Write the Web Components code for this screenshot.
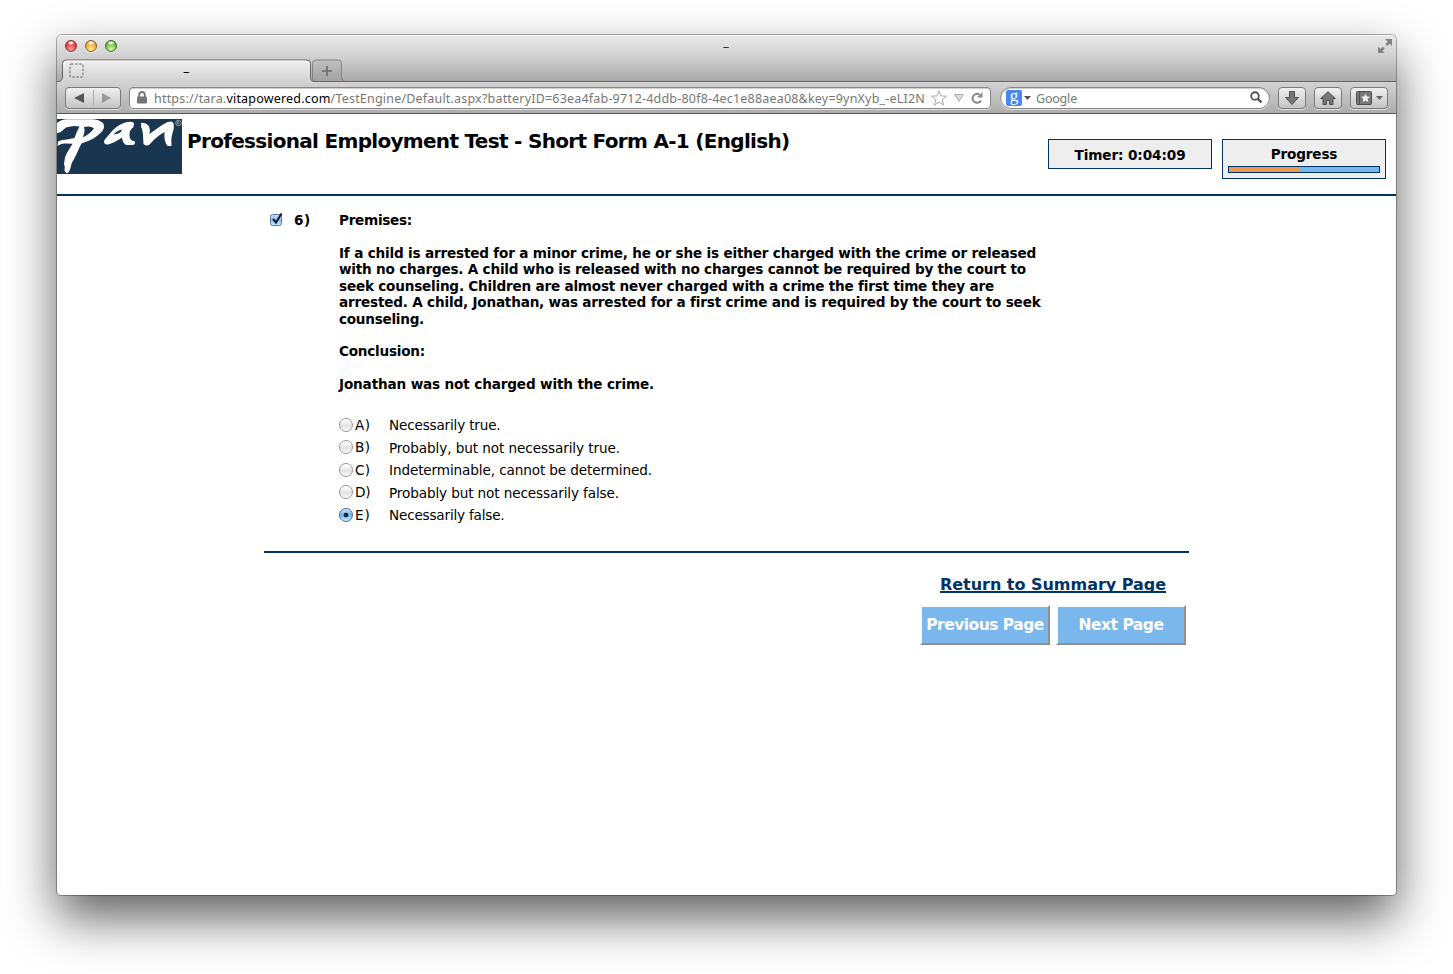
<!DOCTYPE html>
<html lang="en"><head><meta charset="utf-8"><title>Professional Employment Test</title>
<style>
html,body{margin:0;background:#fff}
body{width:1453px;height:974px;overflow:hidden;font-family:"DejaVu Sans",Verdana,sans-serif;color:#000}
</style></head><body>
<browser-window>
<title-bar slot="chrome"></title-bar>
<tab-strip slot="chrome"></tab-strip>
<nav-toolbar slot="chrome"></nav-toolbar>
<test-header></test-header>
<test-question></test-question>
<test-footer></test-footer>
</browser-window>
<script>
function define(name, html, after){
  customElements.define(name, class extends HTMLElement{
    constructor(){
      super();
      const t=document.createElement('template');
      t.innerHTML=html;
      this.attachShadow({mode:'open'}).append(t.content.cloneNode(true));
    }
    connectedCallback(){ if(after) after(this); }
  });
}
/* Text set to a fixed measure by spreading the letters evenly. */
define('fit-text',`<style>:host{display:inline-block;white-space:nowrap}span{display:inline-block;white-space:pre}</style><span><slot></slot></span>`,el=>{
  const s=el.shadowRoot.querySelector('span'), w=parseFloat(el.getAttribute('w'));
  const n=s.getBoundingClientRect().width;
  if(n&&w) s.style.letterSpacing=((w-n)/el.textContent.length)+'px';
});

define('title-bar',`<style>
:host{display:grid;grid-template-columns:1fr auto 1fr;align-items:center;height:24px;padding:0 4px 2px 8px;box-sizing:border-box}
.l{display:flex;gap:8px}
i{width:12px;height:12px;box-sizing:border-box;border-radius:50%;border:1px solid #8c2a28;background:radial-gradient(ellipse 4px 2.5px at 50% 18%,#fff 20%,transparent),radial-gradient(circle at 50% 85%,#ffaaa0,#e8393c 60%,#bb2528);box-shadow:0 1px 0 #f4f4f4}
i.y{border-color:#8e5e1c;background:radial-gradient(ellipse 4px 2.5px at 50% 18%,#fff 20%,transparent),radial-gradient(circle at 50% 85%,#ffee9c,#f0a835 60%,#c47a1c)}
i.g{border-color:#3c7022;background:radial-gradient(ellipse 4px 2.5px at 50% 18%,#fff 20%,transparent),radial-gradient(circle at 50% 85%,#d4f8a8,#75bd4a 60%,#4a8c2c)}
b{font:13px "Open Sans",sans-serif;color:#333;margin-right:5px}
svg{justify-self:end}
</style><div class="l"><i></i><i class="y"></i><i class="g"></i></div><b>–</b>
<svg width="15" height="15" viewBox="0 0 15 15"><g fill="#858585"><path d="M8 0h7v7l-2.3-2.3-2.4 2.4-2-2 2.4-2.4z"/><path d="M1 7.500v6.500h6.500l-2-2 2.200-2.200-2-2-2.400 2z"/></g></svg>`);

define('tab-strip',`<style>
:host{display:flex;height:23px;position:relative;align-items:stretch}
.tab{display:flex;align-items:center;width:248px;margin-left:6px;position:relative;font:13px "Open Sans",sans-serif}
.tab svg.f{margin-left:6px}.tab b{font-weight:400;margin-left:99px}
.plus{width:31px;display:grid;place-items:center;padding-left:0}
svg.bg{position:absolute;left:0;top:0}
.plus svg{position:relative}
</style>
<svg class="bg" width="1339" height="23" viewBox="0 0 1339 23">
<defs><linearGradient id="t" x1="0" y1="0" x2="0" y2="1"><stop stop-color="#efefef"/><stop offset="1" stop-color="#d2d2d2"/></linearGradient></defs>
<path d="M1 23C4 22 5.500 21 5.500 18V4.500Q5.500 1 9 1H250Q253.500 1 253.500 4.500V18C253.500 21 254.500 22 257 23Z" fill="url(#t)"/>
<path d="M255.500 18V4.500Q255.500 1 259 1H281Q284.500 1 284.500 4.500V18Q284.500 22 288 22.500H258Q255.500 22 255.500 18Z" fill="#777" fill-opacity=".13" stroke="#777" stroke-opacity=".8"/>
<path d="M0 22.500H1C4 22.500 5.500 21 5.500 18V4.500Q5.500 1 9 1H250Q253.500 1 253.500 4.500V18C253.500 21 254.500 22.500 257 22.500H1339" fill="none" stroke="#686868"/>
<path d="M7 6Q7 2.200 10 2.200H249" fill="none" stroke="#fff"/></svg>
<div class="tab"><svg class="f" width="15" height="15"><rect x="1" y="1" width="13" height="13" rx="1" fill="none" stroke="#666" stroke-dasharray="2.500 1.500"/></svg><b>–</b></div>
<div class="plus"><svg width="12" height="12"><path d="M6 1v10M1 6h10" stroke="#6a6a6a" stroke-width="1.700"/></svg></div>`);

define('nav-toolbar',`<style>
:host{display:flex;align-items:center;height:32px;box-sizing:border-box;padding:0 8px;border-bottom:1px solid #585858;background:linear-gradient(#d3d3d3,#adadad);font-family:"Noto Sans","Open Sans",sans-serif;font-size:12.500px;color:#777}
.btn{box-sizing:border-box;height:22px;border:1px solid #7b7b7b;border-radius:4px;background:linear-gradient(#f0f0f0,#c4c4c4);box-shadow:0 1px 0 #ddd;display:flex;align-items:center;justify-content:center}
.nav{width:56px;justify-content:space-between;padding:0 9px 0 8px}
.nav i{width:1px;height:16px;background:#b0b0b0;margin:0}
.field{box-sizing:border-box;height:22px;border:1px solid #888;background:#fff;box-shadow:inset 0 1px 1px #ccc,0 1px 0 #ddd;display:flex;align-items:center}
.url{width:862px;margin-left:8px;border-radius:4px;padding-left:7px}
fit-text{padding-top:1px}
.url fit-text{margin-left:7px;width:771px}
.search{width:270px;margin-left:9px;border-radius:11px;padding:0 6px 0 5px}
.g{box-sizing:border-box;width:16px;height:16px;border-radius:2px;background:#4787ee;color:#fff;font:17px/12px "Liberation Serif",serif;text-align:center}
.search .car{margin:0 5px 0 2px}.search .mag{margin-left:auto}
</style>
<div class="btn nav"><svg width="10" height="10"><path d="M0 5L10 0v10z" fill="#555"/></svg><i></i><svg width="9" height="10"><path d="M9 5L0 0v10z" fill="#999"/></svg></div>
<div class="field url"><svg width="10" height="13" viewBox="0 0 10 13"><path d="M2.200 6V3.800Q2.200 1 5 1t2.800 2.800V6" fill="none" stroke="#757575" stroke-width="1.800"/><rect y="5.500" width="10" height="7" rx="1" fill="#757575"/></svg>
<fit-text w="771">https://tara.<span style="color:#000">vitapowered.com</span>/TestEngine/Default.aspx?batteryID=63ea4fab-9712-4ddb-80f8-4ec1e88aea08&amp;key=9ynXyb_-eLI2N</fit-text>
<svg style="margin-left:6px" width="16" height="16" viewBox="0 0 16 16"><path d="M8 .8l2 5.100 5.400.300-4.200 3.500 1.400 5.300L8 12.100 3.400 15l1.400-5.300L.6 6.200 6 5.900z" fill="#fff" stroke="#aaa"/></svg>
<svg style="margin-left:7px" width="10" height="8"><path d="M.7.5h8.600L5 7.300z" fill="#ddd" stroke="#aaa"/></svg>
<svg style="margin-left:7px" width="12" height="12" viewBox="0 0 12 12"><path d="M10 8.500A4.500 4.500 0 1 1 8.500 2.500" fill="none" stroke="#888" stroke-width="2"/><path d="M11.500 0v5.500H6z" fill="#888"/></svg></div>
<div class="field search"><div class="g">g</div><svg class="car" width="7" height="4"><path d="M0 0h7L3.500 4z" fill="#555"/></svg><fit-text w="41">Google</fit-text>
<svg class="mag" width="13" height="13" viewBox="0 0 13 13"><circle cx="5" cy="5" r="3.800" fill="none" stroke="#555" stroke-width="1.900"/><path d="M7.800 7.800L11.500 11.500" stroke="#555" stroke-width="2.400"/></svg></div>
<div class="btn" style="width:28px;margin-left:8px"><svg width="14" height="14"><path d="M4.500.5h5v6h4L7 13.500.5 6.500h4z" fill="#777" stroke="#4d4d4d"/></svg></div>
<div class="btn" style="width:28px;margin-left:8px"><svg width="16" height="14"><path d="M8 .7L.7 7.500H3v6h3.500v-4h3v4H13v-6h2.300z" fill="#777" stroke="#4d4d4d"/></svg></div>
<div class="btn" style="width:38px;margin-left:8px;gap:4px"><svg width="16" height="14"><rect x=".5" y=".5" width="15" height="13" rx="1" fill="#777" stroke="#505050"/><path d="M3.500 1v12" stroke="#505050"/><path d="M9.500 2.500l1.300 3 3.200.3-2.400 2.100.7 3.200-2.800-1.700-2.800 1.700.7-3.200L5 5.800l3.200-.3z" fill="#f4f4f4"/></svg><svg width="7" height="4"><path d="M0 0h7L3.500 4z" fill="#666"/></svg></div>`);

define('browser-window',`<style>
:host{position:absolute;top:0;left:0;display:flex;flex-direction:column;width:1339px;height:860px;margin:35px 0 0 57px;border-radius:5px 5px 4px 4px;background:#fff;box-shadow:0 0 0 1px rgba(0,0,0,.3),0 23px 50px rgba(0,0,0,.63);overflow:hidden}
header{background:linear-gradient(#e9e9e9,#d0d0d0 22px,#a9a9a9 46px);box-shadow:inset 0 1px 0 #f7f7f7}
</style><header><slot name="chrome"></slot></header><main><slot></slot></main>`);

define('pan-logo',`<style>:host{display:block;width:125px;height:55px;background:#1a354f}svg{display:block}</style>
<svg width="125" height="55" viewBox="0 0 125 55" role="img" aria-label="pan"><g fill="#fff">
<path fill-rule="evenodd" d="M0 4Q4 0 11 .2L35 .2Q42 .5 46 4Q48.500 8 45 12.500C40 18 33 22 24.500 24.500C22 29 20 35 17 40Q14 44 13.500 49Q12 53.500 10 54.500L7.500 52Q8.500 48 7 45Q8 36 10.500 33L15.500 24.800L8 24.500Q4 24 .5 27L1 22.500Q5 20.500 10 20.500L17.500 19Q20 12 22.500 7.500Q16 6 9 8.500L3 13.500L0 14ZM27 8Q28.500 13 25.500 18.500Q33 15 37 9.500Q34 6.500 27 8Z"/>
<path fill-rule="evenodd" d="M77 4Q75 2 70 3Q62 5 56 11C51 17 48 20 47 22Q47 26 51 25.500Q57 24 65 18.500Q65.500 24 69 26L76 26Q79 25 77.500 22Q73 22 72.500 17Q72 11 76.500 8ZM65 10.500Q64 15 56.500 15.500Q60 11.500 65 10.500Z"/>
<path d="M84 4Q88 3 92 7Q93.500 11 92.500 15Q99 10 106 5.500Q113 1 116 3.500Q118 7 115.500 14Q113.500 20 114.500 27L110.500 27Q106.500 22 107.500 13Q100 17 93 25Q90 28 86.500 25L86 16Q85.500 10 84 8Z"/></g>
<circle cx="121.500" cy="4" r="2.800" fill="none" stroke="#a9b4bd" stroke-width=".8"/><path d="M120.500 5.500v-3h1.500v1.500h-1.500l2 1.500" fill="none" stroke="#a9b4bd" stroke-width=".6"/></svg>`);

define('status-box',`<style>:host{display:flex;flex-direction:column;box-sizing:border-box;width:164px;height:30px;border:1px solid #036;background:#eee;align-items:center;font-weight:700;font-size:13.600px;line-height:16px;padding-top:7px}
:host([bar]){height:40px;padding-top:6px}i{display:none}
:host([bar]) i{display:block;box-sizing:border-box;width:152px;height:7px;margin-top:4px;border:1px solid #036;background:linear-gradient(90deg,#eb994f 71px,#79b7ec 71px)}
</style><slot></slot><i></i>`);

define('test-header',`<style>
:host{display:flex;height:82px;box-sizing:border-box;padding-top:5px;border-bottom:2px solid #036;align-items:flex-start}
h1{margin:10px 0 0 5px;font-size:20px;line-height:24px}
.s{margin:20px 10px 0 auto;display:flex;gap:10px;align-items:flex-start}
</style><pan-logo></pan-logo><h1><fit-text w="602.500">Professional Employment Test - Short Form A-1 (English)</fit-text></h1>
<div class="s"><status-box><fit-text w="111">Timer: 0:04:09</fit-text></status-box><status-box bar><fit-text w="66.500">Progress</fit-text></status-box></div>`);

define('answer-option',`<style>:host{display:flex;height:22.500px;line-height:16px;font-size:13.600px}
i{box-sizing:border-box;width:14px;height:14px;border:1px solid #999;border-radius:50%;background:linear-gradient(#fff 10%,#e2e2e2 55%,#fafafa);margin:1px 2px 0 0;display:grid;place-items:center}
:host([on]) i{border-color:#4a68a5;background:radial-gradient(circle,#102848 0 2px,transparent 2.700px),linear-gradient(#d5e7fb,#78aee5 50%,#c5f2ff)}
.k{width:34px}.t{padding-top:.5px}
</style><i></i><span class="k"><slot name="key"></slot></span><span class="t"><slot></slot></span>`);

const lines=[['Premises:',73],0,
['If a child is arrested for a minor crime, he or she is either charged with the crime or released',697],
['with no charges. A child who is released with no charges cannot be required by the court to',687],
['seek counseling. Children are almost never charged with a crime the first time they are',654.5],
['arrested. A child, Jonathan, was arrested for a first crime and is required by the court to seek',701],
['counseling.',85],0,['Conclusion:',86],0,['Jonathan was not charged with the crime.',315]];
const opts=[['A','Necessarily true.',111.5],['B','Probably, but not necessarily true.',231],['C','Indeterminable, cannot be determined.',263],['D','Probably but not necessarily false.',230],['E','Necessarily false.',115.5]];
define('test-question',`<style>
:host{display:grid;grid-template-columns:30px 45px 1fr;width:925px;height:357px;box-sizing:border-box;margin-left:207px;padding-top:16px;border-bottom:2px solid #036;font-size:13.600px;line-height:16.430px}
.box{padding:0 0 0 5px}.box svg{display:block}
.n,.q{font-weight:700}.q div{height:16.430px}
.a{margin-top:24.300px;font-weight:400}
</style><div class="box"><svg width="16" height="16"><defs><linearGradient id="c" x1="0" y1="0" x2="0" y2="1"><stop stop-color="#c9dff7"/><stop offset=".5" stop-color="#8cbef0"/><stop offset="1" stop-color="#c5edff"/></linearGradient></defs><rect x="1.500" y="2.500" width="11" height="11" rx="2" fill="url(#c)" stroke="#5a77a8"/><path d="M4 7l3 3.500L12.500 1.500" fill="none" stroke="#0c1c36" stroke-width="2.100"/></svg></div>
<div class="n"><fit-text w="17">6)</fit-text></div>
<div class="q">${lines.map(l=>`<div>${l?`<fit-text w="${l[1]}">${l[0]}</fit-text>`:''}</div>`).join('')}
<section class="a">${opts.map(o=>`<answer-option${o[0]=='E'?' on':''}><fit-text slot="key" w="15.500">${o[0]})</fit-text><fit-text w="${o[2]}">${o[1]}</fit-text></answer-option>`).join('')}</section></div>`);

define('page-button',`<style>:host{display:block}button{box-sizing:border-box;display:grid;place-items:center;width:130px;height:40px;padding:0;border:2px solid;border-color:#fafafa #8f8f8f #8f8f8f #fafafa;background:#79b7ec;color:#fff;font:700 15.500px/20px "DejaVu Sans",Verdana,sans-serif}</style><button><slot></slot></button>`);
define('test-footer',`<style>
:host{display:flex;flex-direction:column;align-items:flex-end;width:1129px;padding-top:22px}
a{display:block;color:#036;font-weight:700;font-size:16px;line-height:20px;margin-right:20px;text-decoration:none}
a fit-text{box-shadow:inset 0 -2px 0 #036;height:18px;line-height:20px}
div{display:flex;gap:6px;margin-top:10px}
</style><a href="#"><fit-text w="226">Return to Summary Page</fit-text></a>
<div><page-button><fit-text w="117.500">Previous Page</fit-text></page-button><page-button><fit-text w="85">Next Page</fit-text></page-button></div>`);
</script></body></html>
